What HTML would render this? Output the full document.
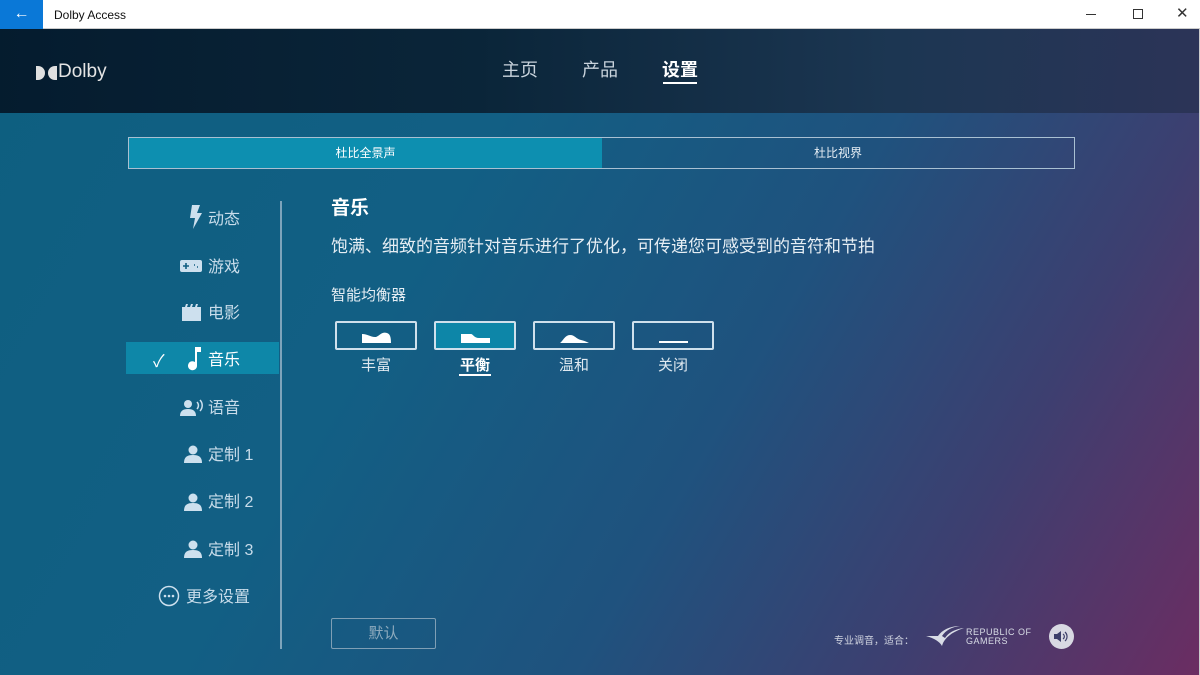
<!DOCTYPE html>
<html><head><meta charset="utf-8"><style>
*{margin:0;padding:0;box-sizing:border-box}
body{width:1200px;height:675px;overflow:hidden;font-family:"Liberation Sans","Noto Sans CJK SC",sans-serif;position:relative;background:#fff}
.title{position:absolute;left:0;top:0;width:1200px;height:29px;background:#fff;border-bottom:1px solid #ccc}
.back{position:absolute;left:0;top:0;width:43px;height:29px;background:#0a78d7;color:#fff;font-size:16px;text-align:center;line-height:28px}
.tt{position:absolute;left:54px;top:8px;font-size:12px;color:#111}
.app{position:absolute;left:0;top:29px;width:1199px;height:646px;background:linear-gradient(120deg,#0e5f80 0%,#125f84 35%,#1f527e 60%,#3d3f70 80%,#6b2d62 100%)}
.hdr{position:absolute;left:0;top:0;width:1199px;height:84px;background:linear-gradient(90deg,#04182a 0%,#0a2235 40%,#1c3550 75%,#2b3356 100%);opacity:.95}
.abs{position:absolute}
.nav{position:absolute;top:27px;font-size:18px;color:#c9d3dc}
.side{position:absolute;color:#c8dcea;font-size:16px;left:208px;white-space:nowrap}
.icn{fill:#cde0ee}
.eq{position:absolute;top:292px;width:82px;height:29px;border:2px solid #cfe0ec;border-radius:2px}
.eql{position:absolute;top:325px;font-size:15px;color:#dfe9f0;text-align:center;width:82px}
</style></head><body>
<div class="title"><div class="back">&#8592;</div><div class="tt">Dolby Access</div>
<div class="abs" style="left:1086px;top:14px;width:10px;height:1px;background:#333"></div>
<div class="abs" style="left:1133px;top:9px;width:10px;height:10px;border:1px solid #333"></div>
<div class="abs" style="left:1176px;top:4px;font-size:15px;color:#333">✕</div></div>
<div class="app">
<div class="hdr"></div>
<svg class="abs" style="left:36px;top:37px" width="21" height="14"><path d="M0 0h2a7 7 0 0 1 0 14H0z" fill="#e0e0e0"/><path d="M21 0h-2a7 7 0 0 0 0 14h2z" fill="#e0e0e0"/></svg>
<div class="abs" style="left:58px;top:32px;font-size:19px;color:#e4e4e4">Dolby</div>
<div class="nav" style="left:502px">主页</div>
<div class="nav" style="left:582px">产品</div>
<div class="nav" style="left:662px;color:#fff;font-weight:bold">设置</div>
<div class="abs" style="left:663px;top:53px;width:34px;height:2px;background:#fff"></div>
<div class="abs" style="left:128px;top:108px;width:947px;height:32px;border:1px solid #a9c0d2"></div>
<div class="abs" style="left:129px;top:109px;width:473px;height:30px;background:#0d8fb0;color:#fff;font-size:12px;text-align:center;line-height:30px">杜比全景声</div>
<div class="abs" style="left:602px;top:109px;width:472px;height:30px;color:#e6eef4;font-size:12px;text-align:center;line-height:30px">杜比视界</div>
<div class="abs" style="left:280px;top:172px;width:2px;height:448px;background:#7ea4bb"></div>
<div class="abs" style="left:126px;top:313px;width:153px;height:32px;background:#0e87a8"></div>
<svg class="abs" style="left:189px;top:176px" width="14" height="24"><path class="icn" d="M3 0h8l-3 8h5L4 24l2-11H1z"/></svg>
<div class="side" style="top:176px">动态</div>
<svg class="abs" style="left:180px;top:231px" width="22" height="12"><rect class="icn" width="22" height="12" rx="2"/><path d="M3 6h6M6 3v6M14 5h1M17 7h1" stroke="#115e80" stroke-width="1.6"/></svg>
<div class="side" style="top:224px">游戏</div>
<svg class="abs" style="left:182px;top:275px" width="20" height="17"><path class="icn" d="M0 3h3l1-3h2l-1 3h3l1-3h2l-1 3h3l1-3h2l-1 3h4v14H0z"/></svg>
<div class="side" style="top:270px">电影</div>
<div class="abs" style="left:153px;top:318px;color:#fff;font-size:17px">✓</div>
<svg class="abs" style="left:186px;top:318px" width="16" height="24"><path d="M9 0h6v5h-4v14a4.5 4.5 0 1 1-2-4z" fill="#fff"/></svg>
<div class="side" style="top:317px;color:#fff">音乐</div>
<svg class="abs" style="left:180px;top:369px" width="24" height="18"><circle class="icn" cx="8" cy="6" r="4"/><path class="icn" d="M0 18c0-5 3-7 8-7s8 2 8 7z"/><path d="M17 4a5 5 0 0 1 0 7M20 2a8 8 0 0 1 0 11" stroke="#cde0ee" stroke-width="1.5" fill="none"/></svg>
<div class="side" style="top:365px">语音</div>
<svg class="abs" style="left:184px;top:416px" width="18" height="18"><circle class="icn" cx="9" cy="5" r="4.5"/><path class="icn" d="M0 18c0-6 3-8 9-8s9 2 9 8z"/></svg>
<div class="side" style="top:412px">定制 1</div>
<svg class="abs" style="left:184px;top:464px" width="18" height="18"><circle class="icn" cx="9" cy="5" r="4.5"/><path class="icn" d="M0 18c0-6 3-8 9-8s9 2 9 8z"/></svg>
<div class="side" style="top:459px">定制 2</div>
<svg class="abs" style="left:184px;top:511px" width="18" height="18"><circle class="icn" cx="9" cy="5" r="4.5"/><path class="icn" d="M0 18c0-6 3-8 9-8s9 2 9 8z"/></svg>
<div class="side" style="top:507px">定制 3</div>
<svg class="abs" style="left:158px;top:556px" width="22" height="22"><circle cx="11" cy="11" r="9.5" stroke="#cde0ee" stroke-width="1.5" fill="none"/><circle class="icn" cx="7" cy="11" r="1.3"/><circle class="icn" cx="11" cy="11" r="1.3"/><circle class="icn" cx="15" cy="11" r="1.3"/></svg>
<div class="side" style="top:554px;left:186px">更多设置</div>
<div class="abs" style="left:331px;top:164px;font-size:19px;color:#fff;font-weight:bold">音乐</div>
<div class="abs" style="left:331px;top:203px;font-size:17px;color:#e6eef4">饱满、细致的音频针对音乐进行了优化，可传递您可感受到的音符和节拍</div>
<div class="abs" style="left:331px;top:255px;font-size:15px;color:#e6eef4">智能均衡器</div>
<div class="eq" style="left:335px"><svg width="78" height="25"><path d="M25 20v-9c6 0 8 3 13 3 4 0 6-6 12-4 3 1 4 4 4 10z" fill="#fff"/></svg></div>
<div class="eq" style="left:434px;background:#0d86a8"><svg width="78" height="25"><path d="M25 20v-9h10c2 0 3 4 8 4h11v5z" fill="#fff"/></svg></div>
<div class="eq" style="left:533px"><svg width="78" height="25"><path d="M25 20c3-2 5-8 10-8 5 0 6 4 11 5 4 1 6 2 8 3z" fill="#fff"/></svg></div>
<div class="eq" style="left:632px"><svg width="78" height="25"><rect x="25" y="18" width="29" height="2" fill="#fff"/></svg></div>
<div class="eql" style="left:335px">丰富</div>
<div class="eql" style="left:434px;color:#fff;font-weight:bold">平衡</div>
<div class="abs" style="left:459px;top:345px;width:32px;height:2px;background:#fff"></div>
<div class="eql" style="left:533px">温和</div>
<div class="eql" style="left:632px">关闭</div>
<div class="abs" style="left:331px;top:589px;width:105px;height:31px;border:1px solid #7f9fb5;border-radius:2px;color:#8daabd;font-size:15px;text-align:center;line-height:29px">默认</div>
<div class="abs" style="left:834px;top:603px;font-size:10px;color:#d0d4e0">专业调音，适合：</div>
<svg class="abs" style="left:925px;top:597px" width="40" height="22"><path d="M1 10c8 2 14 6 16 10 2-8 10-14 22-18-9 1-16 5-19 10l-3-2c4-6 10-9 18-10C25 0 17 4 13 10z" fill="#d8dce6"/></svg>
<div class="abs" style="left:966px;top:599px;font-size:9px;color:#d8dce6;line-height:9px;letter-spacing:.5px">REPUBLIC OF<br>GAMERS</div>
<div class="abs" style="left:1049px;top:595px;width:25px;height:25px;border-radius:50%;background:#d8d8e2"></div>
<svg class="abs" style="left:1054px;top:601px" width="16" height="13"><path d="M0 4h3l4-3v11L3 9H0z" fill="#3d3f6a"/><path d="M9 4a3 3 0 0 1 0 5M11 2a6 6 0 0 1 0 9" stroke="#3d3f6a" stroke-width="1.2" fill="none"/></svg>
</div>
<div class="abs" style="left:1199px;top:29px;width:1px;height:646px;background:#ccc"></div>
</body></html>
